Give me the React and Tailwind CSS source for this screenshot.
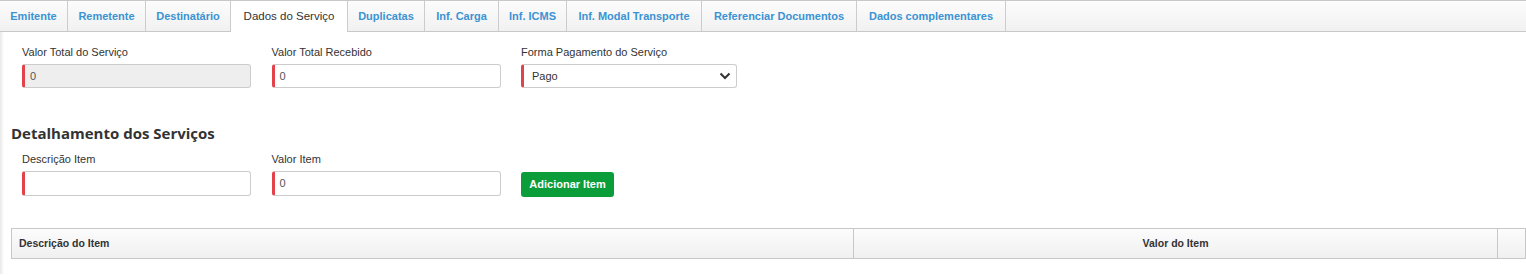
import React from "react";

const tabs = [
  { label: "Emitente", w: "w-[68px]" },
  { label: "Remetente", w: "w-[78px]" },
  { label: "Destinatário", w: "w-[85px]" },
  { label: "Dados do Serviço", w: "w-[117px]", active: true },
  { label: "Duplicatas", w: "w-[77px]" },
  { label: "Inf. Carga", w: "w-[74px]" },
  { label: "Inf. ICMS", w: "w-[68px]" },
  { label: "Inf. Modal Transporte", w: "w-[135px]" },
  { label: "Referenciar Documentos", w: "w-[155px]" },
  { label: "Dados complementares", w: "w-[149px]" },
];

function Field({ label, children }) {
  return (
    <div className="w-[249.5px] shrink-0">
      <div className="h-[16px] leading-[16px] text-[11px] text-[#333]">{label}</div>
      <div className="mt-[4px]">{children}</div>
    </div>
  );
}

function Input({ value, disabled, h = "h-[24px]" }) {
  return (
    <div
      className={`${h} w-[229px] flex items-center rounded-[3px] border border-[#cccccc] border-l-[3px] border-l-[#e2434b] pl-[5px] text-[11px] text-[#555] ${
        disabled ? "bg-[#eeeeee]" : "bg-white"
      }`}
    >
      {value}
    </div>
  );
}

export default function App() {
  return (
    <div className="w-[1526px] h-[275px] bg-white overflow-hidden font-['Liberation_Sans',Arial,sans-serif]">
      <div className="flex h-[32px] border-t border-b border-[#c8c8c8] bg-gradient-to-b from-[#fcfcfc] to-[#f1f1f1]">
        {tabs.map((t) => (
          <div
            key={t.label}
            className={`${t.w} shrink-0 flex items-center justify-center border-r border-[#cccccc] ${
              t.active
                ? "bg-white h-[31px] text-[11.5px] text-[#333]"
                : "text-[11px] font-bold text-[#3b93d3]"
            }`}
          >
            {t.label}
          </div>
        ))}
      </div>
      <div className="h-[242px] bg-[linear-gradient(90deg,#e8e8e8_0px,#ffffff_4px)] pt-[12px]">
        <div className="flex pl-[22px]">
          <Field label="Valor Total do Serviço">
            <Input value="0" disabled />
          </Field>
          <Field label="Valor Total Recebido">
            <Input value="0" />
          </Field>
          <Field label="Forma Pagamento do Serviço">
            <div className="h-[24px] w-[216px] flex items-center justify-between rounded-[3px] border border-[#cccccc] border-l-[3px] border-l-[#e2434b] bg-white pl-[8px] pr-[5px] text-[11px] text-[#333]">
              <span>Pago</span>
              <svg width="12" height="8" viewBox="0 0 12 8">
                <polyline points="1.5,1.5 6,6 10.5,1.5" fill="none" stroke="#333" strokeWidth="2" />
              </svg>
            </div>
          </Field>
        </div>
        <div className="mt-[35px] pl-[11px] h-[20px] leading-[20px] text-[15px] font-bold text-[#333] font-['Open_Sans',sans-serif]">
          Detalhamento dos Serviços
        </div>
        <div className="flex items-end pl-[22px] mt-[8px]">
          <Field label="Descrição Item">
            <Input value="" h="h-[25px]" />
          </Field>
          <Field label="Valor Item">
            <Input value="0" h="h-[25px]" />
          </Field>
          <button className="mb-[-1px] h-[25px] w-[93px] rounded-[3px] bg-[#0a9d3a] text-white text-[11px] font-bold">
            Adicionar Item
          </button>
        </div>
        <div className="ml-[11px] mt-[32px] w-[1515px] h-[31px] flex border border-[#c8c8c8] bg-gradient-to-b from-[#fcfcfc] to-[#f0f0f0] text-[10.5px] font-bold text-[#333]">
          <div className="w-[842px] flex items-center pl-[7px] border-r border-[#c8c8c8]">Descrição do Item</div>
          <div className="w-[644px] flex items-center justify-center border-r border-[#c8c8c8]">Valor do Item</div>
          <div className="flex-1" />
        </div>
      </div>
    </div>
  );
}
